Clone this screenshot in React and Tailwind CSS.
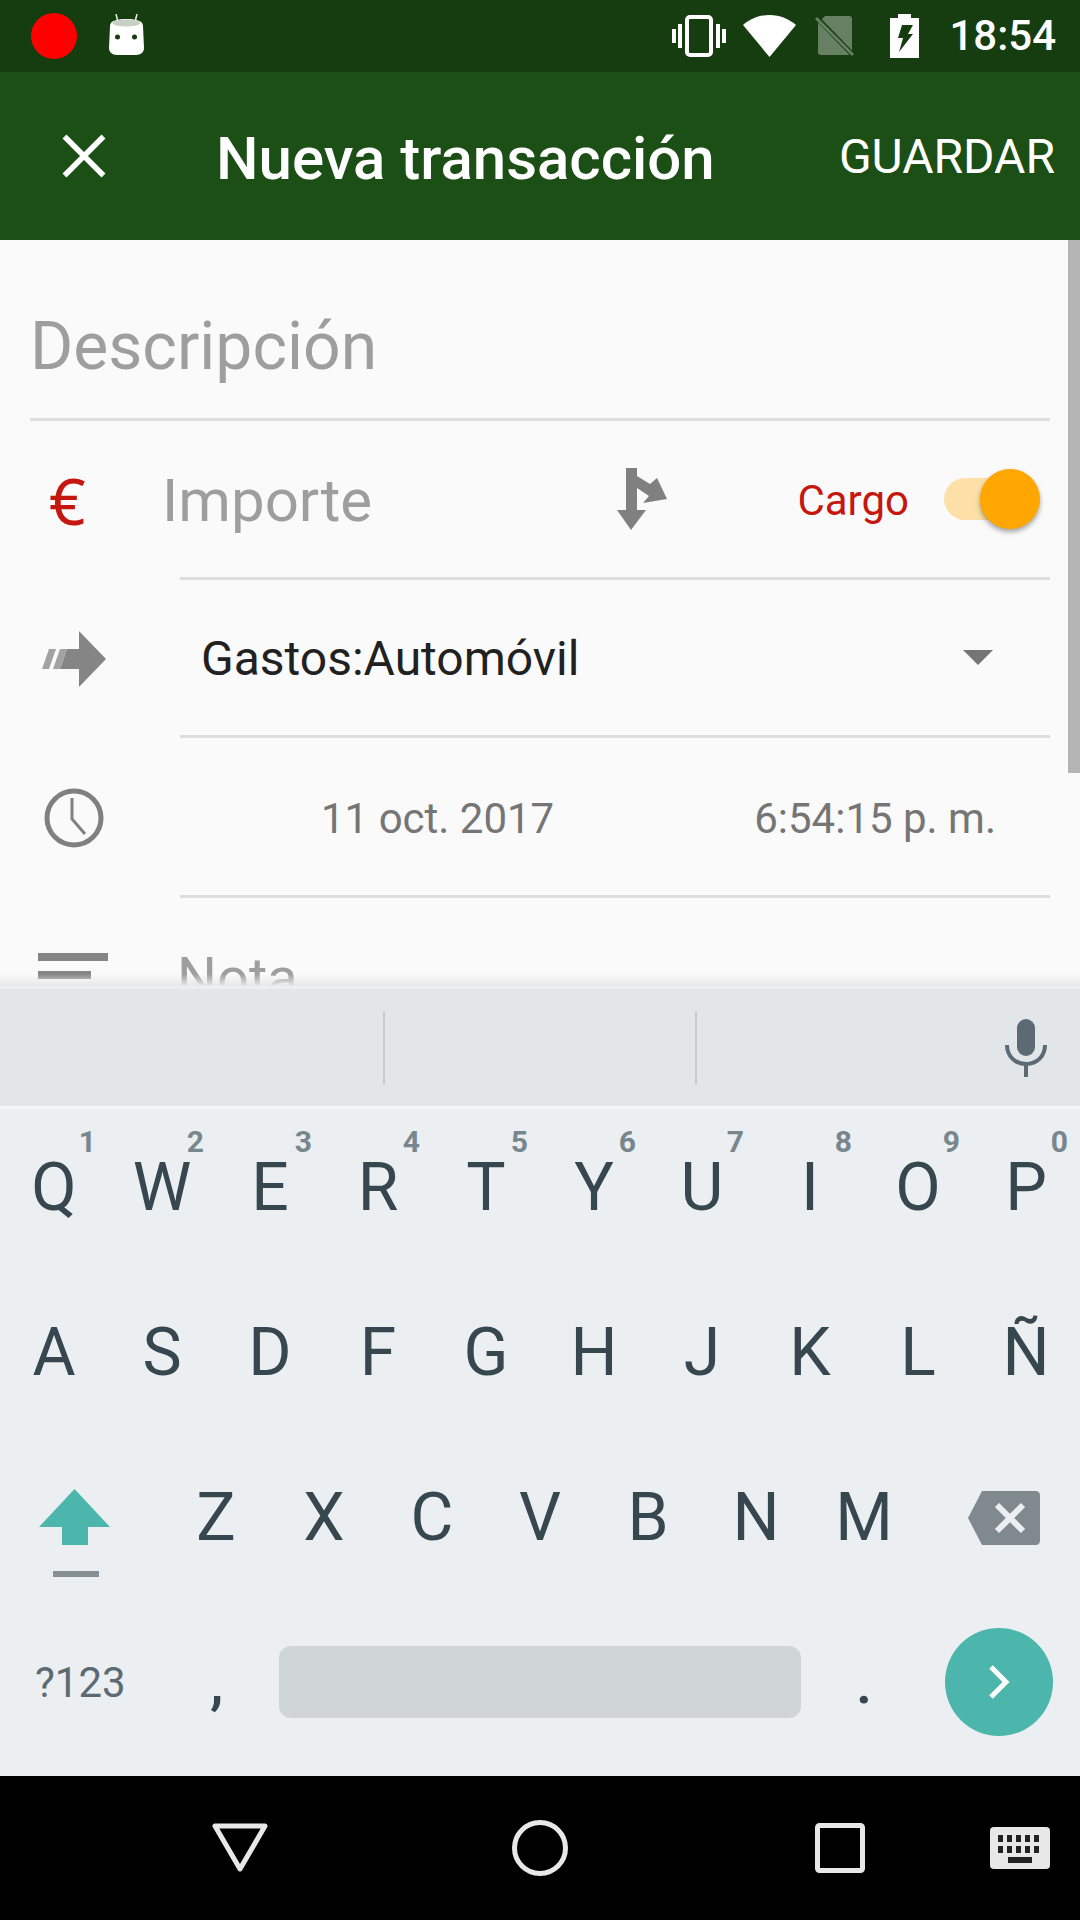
import React from "react";

const row1 = [
  ["Q", "1"],
  ["W", "2"],
  ["E", "3"],
  ["R", "4"],
  ["T", "5"],
  ["Y", "6"],
  ["U", "7"],
  ["I", "8"],
  ["O", "9"],
  ["P", "0"],
];
const row2 = ["A", "S", "D", "F", "G", "H", "J", "K", "L", "Ñ"];
const row3 = ["Z", "X", "C", "V", "B", "N", "M"];

const StatusBar = () => (
  <div className="h-[72px] shrink-0 bg-[#163d10] flex items-center pl-[31px] pr-[24px]">
    <div className="w-[46px] h-[46px] rounded-full bg-[#ff0000]"></div>
    <svg className="ml-[32px] mb-[3px]" width="35" height="41" viewBox="0 0 35 41">
      <path d="M7 0l2 8M28 0l-2 8" stroke="#e8efe6" strokeWidth="1.500" />
      <path d="M1 12c0-5 6-7 16.500-7S34 7 34 12l1 22c0 4-3 7-8 7H8c-5 0-8-3-8-7z" fill="#fff" />
      <ellipse cx="17.500" cy="9" rx="14" ry="3.500" fill="#c5d0c3" />
      <circle cx="8.500" cy="23" r="2.500" fill="#163d10" />
      <circle cx="25.500" cy="23" r="2.500" fill="#163d10" />
    </svg>
    <div className="flex-1"></div>
    <svg width="54" height="42" viewBox="0 0 54 42" fill="none">
      <rect x="15" y="2" width="24" height="38" rx="3" stroke="#fff" strokeWidth="4" />
      <path d="M0 14h4v14H0zM6 9h4v24H6zM44 9h4v24h-4zM50 14h4v14h-4z" fill="#fff" />
    </svg>
    <svg className="ml-[17px]" width="53" height="42" viewBox="0 0 53 42">
      <path d="M0 10C7 4 16 0 26.500 0S46 4 53 10L26.500 42z" fill="#fff" />
    </svg>
    <svg className="ml-[19px]" width="40" height="42" viewBox="0 0 40 42">
      <path d="M10 1h24c2 0 3 1 3 3v36H6c-2 0-3-1-3-3V8z" fill="#fff" opacity="0.35" />
      <path d="M1 2l37 38" stroke="#163d10" strokeWidth="5" />
      <path d="M0 4l2-2 37 37-2 2z" fill="#fff" opacity="0.35" />
    </svg>
    <svg className="ml-[35px]" width="29" height="44" viewBox="0 0 29 44">
      <path d="M8 0h13v4h8v40H0V4h8z" fill="#fff" />
      <path d="M12 11h11l-5 9h5L9 38l4-14H8z" fill="#163d10" />
    </svg>
    <span className="ml-[30px] text-[42px] font-medium text-white leading-none font-['Roboto',sans-serif]">18:54</span>
  </div>
);

const Toolbar = () => (
  <div className="h-[168px] shrink-0 bg-[#1c4f16] flex items-center text-white font-['Roboto',sans-serif]">
    <svg className="ml-[62px]" width="44" height="44" viewBox="0 0 44 44" fill="none">
      <path d="M2.500 2.500l39 39M41.500 2.500l-39 39" stroke="#fff" strokeWidth="5.500" />
    </svg>
    <span className="ml-[110px] mt-[5px] text-[60px] font-medium leading-none">Nueva transacción</span>
    <div className="flex-1"></div>
    <span className="mr-[25px] text-[48px] leading-none mt-[1px]">GUARDAR</span>
  </div>
);

const Form = () => (
  <div className="flex-1 relative overflow-hidden bg-[#fafafa] font-['Roboto',sans-serif]">
    <div className="h-[181px] mx-[30px] border-b-[3px] border-[#dddddd] flex items-center pt-[36px]">
      <span className="text-[66px] leading-none text-[#9e9e9e]">Descripción</span>
    </div>

    <div className="h-[159px] flex">
      <div className="w-[180px] flex items-center">
        <span className="ml-[49px] text-[64px] leading-none text-[#c5170f] font-['Noto_Sans',sans-serif]">€</span>
      </div>
      <div className="flex-1 mr-[30px] border-b-[3px] border-[#dddddd] flex items-center">
        <span className="-ml-[18px] mt-[4px] text-[60px] leading-none text-[#9e9e9e]">Importe</span>
        <svg className="ml-[245px]" width="50" height="64" viewBox="0 0 50 64">
          <path d="M9 1h11v8l13 8 7-6 10 21-24 4 6-7-12-8v22h9L14 63 0 43h9z" fill="#808080" />
        </svg>
        <div className="flex-1"></div>
        <span className="mt-[4px] text-[42px] leading-none text-[#c5170f] mr-[35px]">Cargo</span>
        <div className="relative w-[76px] h-[42px] rounded-full bg-[#fce0a8] mr-[30px]">
          <div className="absolute -right-[20px] -top-[9px] w-[60px] h-[60px] rounded-full bg-[#ffa600] shadow-[0_3px_5px_rgba(0,0,0,0.35)]"></div>
        </div>
      </div>
    </div>

    <div className="h-[158px] flex">
      <div className="w-[180px] flex items-center">
        <svg className="ml-[42px]" width="64" height="56" viewBox="0 0 64 56">
          <path d="M37 0l27 28-27 28V38H18l7-20h12z" fill="#858585" />
          <path d="M7 18h7L7 38H0zM18 18h7l-7 20h-7z" fill="#a3a3a3" />
        </svg>
      </div>
      <div className="flex-1 mr-[30px] border-b-[3px] border-[#dddddd] flex items-center pl-[21px]">
        <span className="mt-[2px] text-[48px] leading-none text-[#212121]">Gastos:Automóvil</span>
        <div className="flex-1"></div>
        <svg className="mr-[57px]" width="30" height="15" viewBox="0 0 30 15">
          <path d="M0 0h30L15 15z" fill="#757575" />
        </svg>
      </div>
    </div>

    <div className="h-[160px] flex">
      <div className="w-[180px] flex items-center">
        <svg className="ml-[44px]" width="60" height="60" viewBox="0 0 60 60" fill="none">
          <circle cx="30" cy="30" r="27" stroke="#808080" strokeWidth="5" />
          <path d="M28 10v21l13 15" stroke="#808080" strokeWidth="3" />
        </svg>
      </div>
      <div className="flex-1 mr-[30px] border-b-[3px] border-[#dddddd] flex items-center justify-between pl-[141px] pr-[54px]">
        <span className="mt-[4px] text-[42px] leading-none text-[#757575]">11 oct. 2017</span>
        <span className="mt-[4px] text-[42px] leading-none text-[#757575]">6:54:15 p. m.</span>
      </div>
    </div>

    <div className="flex pt-[55px]">
      <div className="w-[177px] pl-[38px] flex flex-col gap-[10px]">
        <div className="w-[70px] h-[8px] bg-[#858585]"></div>
        <div className="w-[53px] h-[8px] bg-[#858585]"></div>
      </div>
      <span className="-mt-[3px] text-[56px] leading-none text-[#9e9e9e]">Nota</span>
    </div>

    <div className="absolute right-0 top-0 w-[12px] h-[533px] bg-[#b5b5b5]"></div>
    <div className="absolute left-0 right-0 bottom-0 h-[12px] bg-gradient-to-b from-transparent to-[#e8e8e8]"></div>
  </div>
);

const Keyboard = () => (
  <div className="h-[790px] shrink-0 bg-[#eceff1] border-t-[3px] border-[#eceeef] font-['Roboto',sans-serif]">
    <div className="h-[117px] bg-[#e3e6e9] flex items-center">
      <div className="w-[2px] h-[72px] bg-[#c8ccd0] ml-[383px]"></div>
      <div className="w-[2px] h-[72px] bg-[#c8ccd0] ml-[310px]"></div>
      <svg className="ml-[308px]" width="42" height="58" viewBox="0 0 42 58" fill="none">
        <rect x="12" y="0" width="18" height="37" rx="9" fill="#5b6a73" />
        <path d="M2 26c0 11 8 19 19 19s19-8 19-19" stroke="#5b6a73" strokeWidth="4" />
        <path d="M21 44v14" stroke="#5b6a73" strokeWidth="4" />
      </svg>
    </div>
    <div className="h-[3px] bg-[#f3f5f6]"></div>

    <div className="-mt-[4px] text-[#37474f]">
      <div className="h-[165px] grid grid-cols-10 items-center">
        {row1.map(([letter, digit]) => (
          <div key={letter} className="relative text-center text-[66px] leading-none">
            {letter}
            <span className="absolute right-[12px] -top-[31px] text-[30px] leading-[35px] font-bold text-[#78868d]">{digit}</span>
          </div>
        ))}
      </div>
      <div className="h-[165px] grid grid-cols-10 items-center">
        {row2.map((letter) => (
          <div key={letter} className="text-center text-[66px] leading-none">{letter}</div>
        ))}
      </div>
      <div className="h-[165px] flex items-center">
        <div className="w-[162px] mt-[30px] flex flex-col items-start pl-[39px]">
          <svg width="71" height="56" viewBox="0 0 71 56">
            <path d="M35.500 0L71 38H49v18H23V38H0z" fill="#4db6ac" />
          </svg>
          <div className="w-[46px] h-[6px] bg-[#858f94] mt-[26px] ml-[14px]"></div>
        </div>
        {row3.map((letter) => (
          <div key={letter} className="w-[108px] text-center text-[66px] leading-none">{letter}</div>
        ))}
        <div className="flex-1 flex justify-center pl-[10px]">
          <svg width="72" height="54" viewBox="0 0 72 54">
            <path d="M14 0h54c2 0 4 2 4 4v46c0 2-2 4-4 4H14L0 27z" fill="#80898e" />
            <path d="M29 14l26 26M55 14L29 40" stroke="#eceff1" strokeWidth="6" />
          </svg>
        </div>
      </div>
      <div className="h-[165px] flex items-center">
        <div className="w-[162px] pl-[35px] text-[42px] leading-none text-[#5b6a73]">?123</div>
        <div className="w-[117px] pl-[48px] text-[60px] leading-none font-medium">,</div>
        <div className="w-[522px] h-[72px] mb-[2px] rounded-[12px] bg-[#d0d5d8]"></div>
        <div className="w-[126px] text-center text-[60px] leading-none font-medium">.</div>
        <div className="ml-[18px] mb-[2px] w-[108px] h-[108px] rounded-full bg-[#4db6ac] flex items-center justify-center">
          <svg width="22" height="36" viewBox="0 0 22 36" fill="none">
            <path d="M3 3l15 15L3 33" stroke="#fff" strokeWidth="5" />
          </svg>
        </div>
      </div>
    </div>
  </div>
);

const NavBar = () => (
  <div className="h-[144px] shrink-0 bg-black flex items-center">
    <svg className="ml-[212px]" width="56" height="50" viewBox="0 0 56 50" fill="none">
      <path d="M3 3h50L28 46z" stroke="#e8e8e8" strokeWidth="5" strokeLinejoin="round" />
    </svg>
    <svg className="ml-[244px]" width="56" height="56" viewBox="0 0 56 56" fill="none">
      <circle cx="28" cy="28" r="25.500" stroke="#e8e8e8" strokeWidth="5" />
    </svg>
    <svg className="ml-[247px]" width="50" height="50" viewBox="0 0 50 50" fill="none">
      <rect x="2.500" y="2.500" width="45" height="45" rx="2" stroke="#e8e8e8" strokeWidth="5" />
    </svg>
    <svg className="ml-[125px]" width="60" height="42" viewBox="0 0 60 42">
      <rect width="60" height="42" rx="4" fill="#e8e8e8" />
      <path d="M8 8h5v7H8zM17 8h5v7h-5zM26 8h5v7h-5zM35 8h5v7h-5zM44 8h5v7h-5zM8 19h5v7H8zM17 19h5v7h-5zM26 19h5v7h-5zM35 19h5v7h-5zM44 19h5v7h-5zM18 30h24v6H18z" fill="#222" />
    </svg>
  </div>
);

export default function App() {
  return (
    <div className="w-[1080px] h-[1920px] flex flex-col overflow-hidden">
      <StatusBar />
      <Toolbar />
      <Form />
      <Keyboard />
      <NavBar />
    </div>
  );
}
